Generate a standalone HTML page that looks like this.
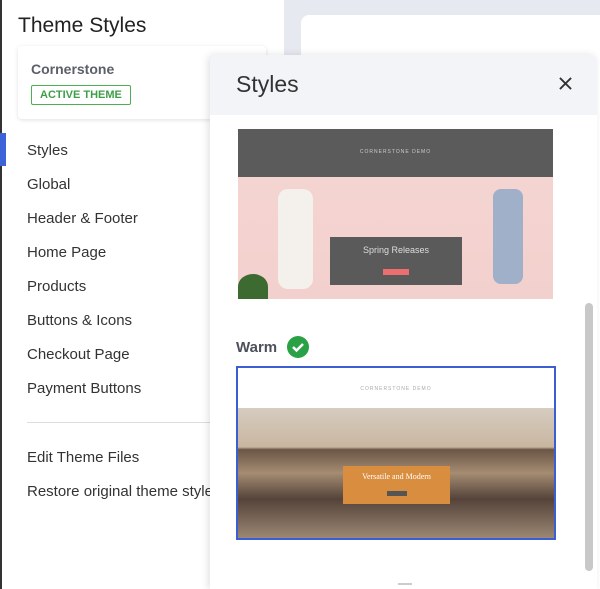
<!DOCTYPE html>
<html><head><style>
*{margin:0;padding:0;box-sizing:border-box}
body{width:600px;height:589px;overflow:hidden;font-family:"Liberation Sans",sans-serif;background:#e8ebf0;position:relative}
.left{position:absolute;left:0;top:0;width:284px;height:589px;background:#fff}
.lb{position:absolute;left:0;top:0;width:2px;height:589px;background:#333}
.bg2{position:absolute;left:284px;top:0;width:316px;height:589px;background:#e6e9ef}
.card2{position:absolute;left:301px;top:15px;width:299px;height:574px;background:#fff;border-radius:8px 0 0 0}
h1{position:absolute;left:18px;top:14px;font-size:21px;font-weight:normal;color:#222}
.theme{position:absolute;left:18px;top:46px;width:248px;height:73px;background:#fff;border-radius:4px;box-shadow:0 1px 4px rgba(0,0,0,.12)}
.theme .n{position:absolute;left:13px;top:15px;font-size:14px;font-weight:bold;color:#5c5f6a}
.badge{position:absolute;left:13px;top:39px;border:1px solid #4caf50;color:#3e9e47;font-size:11px;font-weight:bold;padding:3px 8px;border-radius:2px}
.nav{position:absolute;left:27px;font-size:15px;color:#333}
.mark{position:absolute;left:0;top:133px;width:6px;height:33px;background:#3c64d8}
.hr{position:absolute;left:27px;top:422px;width:240px;height:1px;background:#ddd}
.modal{position:absolute;left:210px;top:55px;width:387px;height:534px;background:#fff;box-shadow:-2px 0 8px rgba(0,0,0,.12);border-radius:6px 6px 0 0;overflow:hidden}
.mh{height:60px;background:#f2f4f8;position:relative}
.mh span{position:absolute;left:26px;top:16px;font-size:23px;color:#333}
.x{position:absolute;left:349px;top:22px}
.img1{position:absolute;left:28px;top:74px;width:315px;height:170px;background:linear-gradient(#f5d6d3,#f2d0cd);overflow:hidden}
.img1 .top{height:48px;background:#5b5b5b;color:#ccc;font-size:5px;text-align:center;padding-top:20px;letter-spacing:1px}
.box{position:absolute;background:#5a5a5a}
.scroll{position:absolute;left:375px;top:248px;width:8px;height:268px;background:#c8c8c8;border-radius:4px}
.warm{position:absolute;left:26px;top:284px;font-size:15px;font-weight:bold;color:#4d505c}
.chk{position:absolute;left:77px;top:281px}
.img2{position:absolute;left:26px;top:311px;width:320px;height:174px;border:2px solid #3b5fd0;background:#fff;overflow:hidden}
.img2 .ph{position:absolute;left:0;top:40px;width:316px;height:130px;background:linear-gradient(#d6ccc0 0%,#c9b6a0 30%,#6b5646 32%,#a58c72 50%,#55433a 70%,#9b8773 100%)}
</style></head><body>
<div class="bg2"></div><div class="card2"></div>
<div class="left">
<h1>Theme Styles</h1>
<div class="theme"><div class="n">Cornerstone</div><div class="badge">ACTIVE THEME</div></div>
<div class="mark"></div>
<div class="nav" style="top:142px">Styles</div>
<div class="nav" style="top:176px">Global</div>
<div class="nav" style="top:210px">Header &amp; Footer</div>
<div class="nav" style="top:244px">Home Page</div>
<div class="nav" style="top:278px">Products</div>
<div class="nav" style="top:312px">Buttons &amp; Icons</div>
<div class="nav" style="top:346px">Checkout Page</div>
<div class="nav" style="top:380px">Payment Buttons</div>
<div class="hr"></div>
<div class="nav" style="top:449px">Edit Theme Files</div>
<div class="nav" style="top:483px;white-space:nowrap">Restore original theme styles</div>
</div>
<div class="lb"></div>
<div class="mark"></div>
<div class="modal">
<div class="mh"><span>Styles</span>
<svg class="x" width="13" height="13" viewBox="0 0 14 14"><path d="M1 1L13 13M13 1L1 13" stroke="#333" stroke-width="2"/></svg></div>
<div class="img1"><div class="top">CORNERSTONE DEMO</div>
<div style="position:absolute;left:40px;top:60px;width:35px;height:100px;background:#f4f1ec;border-radius:10px"></div>
<div style="position:absolute;left:255px;top:60px;width:30px;height:95px;background:#9fb0c8;border-radius:8px"></div>
<div style="position:absolute;left:0;top:145px;width:30px;height:25px;background:#3d6a30;border-radius:50% 50% 0 0"></div>
<div class="box" style="left:92px;top:108px;width:132px;height:48px"><div style="color:#ddd;font-size:9px;text-align:center;margin-top:8px">Spring Releases</div><div style="width:26px;height:6px;background:#ec6e6e;margin:14px auto 0"></div></div>
</div>
<div class="warm">Warm</div>
<svg class="chk" width="22" height="22" viewBox="0 0 22 22"><circle cx="11" cy="11" r="11" fill="#2aa144"/><path d="M6 11l3.5 3.5L16 8" stroke="#fff" stroke-width="2.5" fill="none"/></svg>
<div class="img2"><div style="text-align:center;font-size:5px;color:#aaa;margin-top:18px;letter-spacing:1px">CORNERSTONE DEMO</div>
<div class="ph"></div>
<div style="position:absolute;left:105px;top:98px;width:107px;height:38px;background:#d98d3e"><div style="color:#fff;font-family:'Liberation Serif',serif;font-size:8px;text-align:center;margin-top:6px">Versatile and Modern</div><div style="width:20px;height:5px;background:#555;margin:10px auto 0"></div></div>
</div>
<div class="scroll"></div>
<div style="position:absolute;left:188px;top:528px;width:14px;height:2px;background:#ccc"></div>
</div>
</body></html>
